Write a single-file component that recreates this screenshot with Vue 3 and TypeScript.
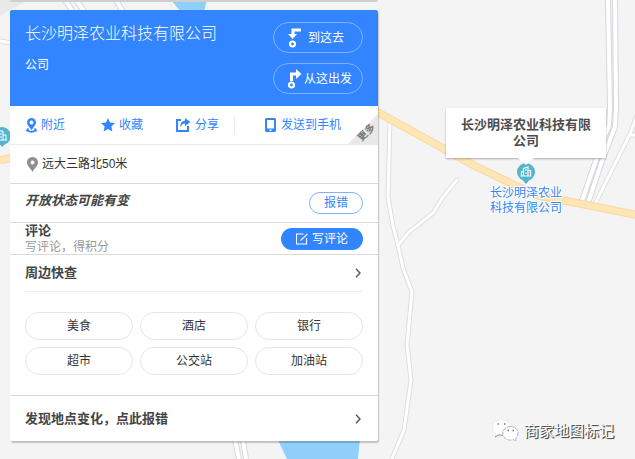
<script setup lang="ts">
import { ref } from 'vue'

interface Place {
  name: string
  category: string
  address: string
}

const place: Place = {
  name: '长沙明泽农业科技有限公司',
  category: '公司',
  address: '远大三路北50米',
}

const nearby: string[] = ['美食', '酒店', '银行', '超市', '公交站', '加油站']
const selected = ref('')
</script>

<template>
  <main class="page" lang="zh-CN">
    <svg class="map" viewBox="0 0 635 459" preserveAspectRatio="xMinYMin slice" aria-hidden="true">
      <path d="M0 0H28L0 16Z" fill="#e9e9e9" />
      <path d="M171 0H207L204 12H181Z M277 438H360L358 459H287Z" fill="#91cffb" />
      <g fill="none" stroke-linejoin="round">
        <g stroke="#d6d7dd" stroke-width="6">
          <path d="M65 0L73 12M76 0L85 12M116 0L123 12M235 440L239 459M243 440L246 459" />
          <path d="M608 0L610 108L609 125L596 160L581 204" />
          <path d="M615 0L616 108L615 127L602 161L587 206" />
        </g>
        <g stroke="#fff" stroke-width="4">
          <path d="M65 0L73 12M76 0L85 12M116 0L123 12M235 440L239 459M243 440L246 459" />
          <path d="M608 0L610 108L609 125L596 160L581 204" />
          <path d="M615 0L616 108L615 127L602 161L587 206" />
        </g>
        <g stroke="#dedede" stroke-width="5" stroke-linecap="round">
          <path d="M390 120L388 197L393 226L398 245L403 268L412 292L407 345L411 380L404 430L391 461" />
          <path d="M398 245L409 232L433 213L443 197L457 180" />
          <path d="M637 116L630 134L595 204M630 135H637M0 41L12 43" />
        </g>
        <g stroke="#fff" stroke-width="3" stroke-linecap="round">
          <path d="M390 120L388 197L393 226L398 245L403 268L412 292L407 345L411 380L404 430L391 461" />
          <path d="M398 245L409 232L433 213L443 197L457 180" />
          <path d="M637 116L630 134L595 204M630 135H637M0 41L12 43" />
        </g>
        <path d="M0 160L12 158M370 108L475 166L523 189L540 196L582 204L637 215" stroke="#f8d6a2" stroke-width="8" />
        <path d="M0 160L12 158M370 108L475 166L523 189L540 196L582 204L637 215" stroke="#ffe6b5" stroke-width="6" />
      </g>
      <g transform="translate(2 136)">
        <path d="M-3 7L0 11L4 7Z" fill="#4aafc8" />
        <circle r="9" fill="#55b5cd" />
        <path d="M-4 4V-5H1V4M1-1H4V4M-5 4H5M-2-2H0M-2 1H0" fill="none" stroke="#fff" />
      </g>
    </svg>

    <div class="search-edge"></div>

    <section class="card">
      <header class="head">
        <div class="names">
          <h1>{{ place.name }}</h1>
          <p>{{ place.category }}</p>
        </div>
        <div class="routes">
          <button type="button" class="route to">
            <svg width="14" height="20" viewBox="0 0 14 20">
              <path d="M13 2H5V7" fill="none" stroke="#fff" stroke-width="3" />
              <path d="M0 6H9L4.500 11Z" fill="#fff" />
              <circle cx="4.500" cy="16" r="2.500" fill="none" stroke="#fff" stroke-width="2.200" />
            </svg>
            到这去
          </button>
          <button type="button" class="route from">
            <svg width="14" height="20" viewBox="0 0 14 20">
              <path d="M3.500 12V5H9" fill="none" stroke="#fff" stroke-width="3" />
              <path d="M8 0V10L13.500 5Z" fill="#fff" />
              <circle cx="3.500" cy="16" r="2.500" fill="none" stroke="#fff" stroke-width="2.200" />
            </svg>
            从这出发
          </button>
        </div>
      </header>

      <nav class="actions">
        <button type="button">
          <svg width="11" height="15" viewBox="0 0 11 15">
            <path d="M5.500 0A4.500 4.500 0 0 1 10 4.500C10 7 7.500 9 5.500 12C3.500 9 1 7 1 4.500A4.500 4.500 0 0 1 5.500 0ZM5.500 2.500A2 2 0 1 0 5.500 6.500A2 2 0 1 0 5.500 2.500Z" fill="#3385ff" fill-rule="evenodd" />
            <path d="M2.500 10.500L1 12.500Q5.500 15 10 12.500L8.500 10.500" fill="none" stroke="#3385ff" stroke-width="1.800" />
          </svg>
          附近
        </button>
        <button type="button">
          <svg width="14" height="14" viewBox="0 0 14 14">
            <path d="M7 0L9 4.600L14 5.100L10.300 8.500L11.400 13.500L7 11L2.600 13.500L3.700 8.500L0 5.100L5 4.600Z" fill="#3385ff" />
          </svg>
          收藏
        </button>
        <button type="button" class="share">
          <svg width="15" height="14" viewBox="0 0 15 14">
            <path d="M5 2H1V13H12V8" fill="none" stroke="#3385ff" stroke-width="2" />
            <path d="M9 0L14.500 4L9 8V5.500Q6 5.500 4.500 9.500Q4 3 9 2.500Z" fill="#3385ff" />
          </svg>
          分享
        </button>
        <button type="button" class="send">
          <svg width="11" height="14" viewBox="0 0 11 14">
            <path d="M1 0H10L11 1V13L10 14H1L0 13V1ZM2 2V10.500H9V2ZM4.500 11.500V13H6.500V11.500Z" fill="#3385ff" fill-rule="evenodd" />
          </svg>
          发送到手机
        </button>
        <button type="button" class="more"><span>更多</span></button>
      </nav>

      <p class="address">
        <svg width="11" height="15" viewBox="0 0 11 15">
          <path d="M5.500 0A5.300 5.300 0 0 1 11 5.500C11 9 7.500 11 5.500 15C3.500 11 0 9 0 5.500A5.300 5.300 0 0 1 5.500 0ZM5.500 3.500A2 2 0 1 0 5.500 7.500A2 2 0 1 0 5.500 3.500Z" fill="#8f8f8f" fill-rule="evenodd" />
        </svg>
        {{ place.address }}
      </p>

      <div class="status">
        <em>开放状态可能有变</em>
        <button type="button" class="outline">报错</button>
      </div>

      <div class="review">
        <div>
          <h2>评论</h2>
          <p>写评论，得积分</p>
        </div>
        <button type="button" class="write">
          <svg width="12" height="12" viewBox="0 0 12 12">
            <path d="M7.500 1H.5V11H10.500V5M4.500 7.500L11.500 .8" fill="none" stroke="#fff" stroke-width="1.100" />
          </svg>
          写评论
        </button>
      </div>

      <div class="around">
        <a href="#nearby" class="line">
          <span>周边快查</span>
          <svg width="6" height="10" viewBox="0 0 6 10"><path d="M1 .8L5 5L1 9.200" fill="none" stroke="#555" stroke-width="1.400" /></svg>
        </a>
        <div id="nearby" class="tags">
          <button v-for="item in nearby" :key="item" type="button" :aria-pressed="selected === item" @click="selected = item">{{ item }}</button>
        </div>
      </div>

      <a href="#report" class="line report">
        <span>发现地点变化，点此报错</span>
        <svg width="6" height="10" viewBox="0 0 6 10"><path d="M1 .8L5 5L1 9.200" fill="none" stroke="#555" stroke-width="1.400" /></svg>
      </a>
    </section>

    <div class="poi">
      <div class="bubble">{{ place.name }}</div>
      <svg class="pin" width="20" height="22" viewBox="0 0 20 22">
        <path d="M6 17L10 22L14 17Z" fill="#4aafc8" />
        <circle cx="10" cy="10" r="9" fill="#55b5cd" />
        <path d="M7.500 14V6.500L12 5V14M7.500 9.500H5.500V14M12 8.500H14.500V14M4.500 14H15.500M9 8H11M9 11H11" fill="none" stroke="#fff" stroke-width="1.200" />
      </svg>
      <span class="label">{{ place.name }}</span>
    </div>

    <div class="watermark">
      <svg width="27" height="23" viewBox="0 0 27 23">
        <path d="M9.500 .5C4.500 .5 .5 4 .5 8.500Q.5 12.500 4 15L3 18L6.500 16Q8 16.500 10.500 16.300A8 7 0 0 1 18.500 7.500C18 3.500 14 .5 9.500 .5Z" fill="#fff" stroke="#ddd" stroke-width=".5" />
        <path d="M18.500 7.500C22.800 7.500 26 10.500 26 14.200Q26 17.500 23.500 19.300L24.300 22L21.500 20.600C16 22.500 10.800 19 10.800 14.500C10.800 10.500 14.500 7.500 18.500 7.500Z" fill="#fff" stroke="#999" stroke-width=".7" stroke-dasharray="4 1" />
        <path d="M3 18L6.500 16L10.500 16.300" fill="none" stroke="#777" stroke-width=".8" />
        <path d="M5.500 5H7M12 5H13.500M15.500 11.500H17M20.500 11.500H22" stroke="#777" stroke-width="1.300" />
      </svg>
      <span>商家地图标记</span>
    </div>
  </main>
</template>

<style>
body {
  margin: 0;
}
</style>

<style scoped>
.page {
  position: relative;
  box-sizing: border-box;
  min-height: 100vh;
  padding: 0 10px 16px;
  overflow: hidden;
  background: #f4f4f4;
  color: #333;
  font: 12px/16px "Liberation Sans", "Noto Sans CJK SC", sans-serif;
}

.map {
  position: absolute;
  inset: 0;
  width: 100%;
  height: 100%;
}

h1,
h2,
p {
  margin: 0;
}

button {
  box-sizing: border-box;
  padding: 0;
  border: 0;
  background: none;
  color: inherit;
  font: inherit;
  white-space: nowrap;
  cursor: pointer;
}

svg {
  flex: none;
}

.search-edge {
  position: relative;
  max-width: 368px;
  height: 2px;
  margin-bottom: 8px;
  border-radius: 0 0 2px 2px;
  background: #cfcfcf;
}

.card {
  position: relative;
  max-width: 368px;
  border-radius: 2px;
  background: #fff;
  box-shadow: 1px 2px 1px rgba(0, 0, 0, 0.2);
}

.head {
  display: flex;
  justify-content: space-between;
  padding: 12px 15px;
  border-radius: 2px 2px 0 0;
  background: #3385ff;
  color: #fff;
}

.names h1 {
  font-size: 16px;
  font-weight: 300;
  line-height: 24px;
}

.names p {
  margin-top: 11px;
}

.routes {
  display: grid;
  gap: 10px;
}

.route {
  display: flex;
  align-items: center;
  justify-content: center;
  width: 90px;
  height: 31px;
  border: 1px solid #80b3ff;
  border-radius: 16px;
}

.to {
  gap: 6px;
  padding-right: 4px;
}

.from {
  gap: 2px;
  padding-left: 4px;
}

.actions {
  position: relative;
  display: grid;
  grid-template-columns: 75px 75px 58px 1fr;
  align-items: center;
  height: 38px;
  padding-left: 16px;
  border-bottom: 1px solid #ebebeb;
  color: #3385ff;
}

.actions button {
  display: flex;
  align-items: center;
  gap: 4px;
  height: 18px;
}

.actions .send {
  padding-left: 30px;
  border-left: 1px solid #ebebeb;
  gap: 5px;
}

.actions .more {
  position: absolute;
  right: 0;
  bottom: 0;
  justify-content: center;
  width: 30px;
  height: 30px;
  background: #e8e8e8;
  color: #777;
  clip-path: polygon(100% 0, 100% 100%, 0 100%);
}

.more span {
  padding-top: 10px;
  font-size: 10px;
  font-weight: bold;
  line-height: 12px;
  transform: rotate(-45deg);
}

.address,
.status,
.review,
.around {
  border-bottom: 1px solid #d9d9d9;
}

.address {
  display: flex;
  align-items: center;
  gap: 4px;
  height: 38px;
  padding: 0 17px;
}

.status,
.review {
  display: flex;
  justify-content: space-between;
  padding: 0 15px;
}

.status {
  align-items: center;
  height: 38px;
}

.status em,
.review h2,
.line {
  color: #444;
  font-size: 13px;
  font-weight: bold;
}

.status em {
  padding-bottom: 4px;
}

.outline {
  width: 54px;
  height: 22px;
  border: 1px solid #80b3ff;
  border-radius: 11px;
  color: #3385ff;
}

.review {
  align-items: center;
  height: 31px;
}

.review h2 {
  line-height: 16px;
}

.review p {
  color: #999;
}

.write {
  display: flex;
  align-items: center;
  justify-content: center;
  gap: 4px;
  width: 82px;
  height: 22px;
  border-radius: 11px;
  background: #3385ff;
  color: #fff;
}

.around {
  padding: 0 15px 20px;
}

.line {
  display: flex;
  align-items: center;
  justify-content: space-between;
  height: 36px;
  padding-right: 2px;
  border-bottom: 1px solid #ebebeb;
  text-decoration: none;
}

.tags {
  display: grid;
  grid-template-columns: repeat(3, 1fr);
  gap: 7px;
  padding-top: 20px;
}

.tags button {
  height: 28px;
  border: 1px solid #e6e6e6;
  border-radius: 14px;
}

.report {
  height: 45px;
  padding: 0 17px 0 15px;
  border: 0;
}

.poi {
  position: absolute;
  top: 108px;
  left: 446px;
  display: flex;
  flex-direction: column;
  align-items: center;
  width: 160px;
}

.bubble {
  position: relative;
  z-index: 1;
  padding: 9px 15px;
  background: #fff;
  box-shadow: 0 1px 2px rgba(0, 0, 0, 0.3);
  color: #4d4d4d;
  font-size: 13px;
  font-weight: bold;
  text-align: center;
}

.bubble::after {
  position: absolute;
  top: 100%;
  left: 50%;
  margin-left: -8px;
  border: 8px solid transparent;
  border-top: 7px solid #fff;
  border-bottom: 0;
  content: "";
}

.pin {
  margin: 4px 0 2px;
}

.label {
  width: 72px;
  color: #3385ff;
  line-height: 15px;
  text-shadow: 0 0 1px #fff, 1px 1px 0 #fff, -1px -1px 0 #fff, 1px -1px 0 #fff, -1px 1px 0 #fff;
}

.watermark {
  position: absolute;
  right: 21px;
  bottom: 17px;
  display: flex;
  align-items: center;
  gap: 5px;
  color: #fff;
  font-size: 15px;
  line-height: 22px;
  text-shadow: 1px 1px 0 #555, 1px 1px 1px #444;
}
</style>
